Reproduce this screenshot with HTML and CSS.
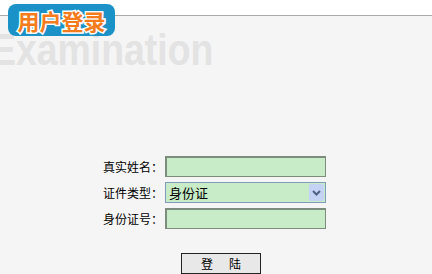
FILE: index.html
```html
<!DOCTYPE html>
<html lang="zh-CN">
<head>
  <meta charset="UTF-8">
  <title>用户登录</title>
  <link rel="stylesheet" href="styles.css">
</head>
<body>
  <header class="top">
    <div class="badge">用户登录</div>
  </header>

  <div class="watermark-wrap">
    <div class="watermark">Examination</div>
  </div>

  <form class="login-form">
    <label class="field-label" for="realname">真实姓名：</label>
    <input class="field" id="realname" type="text">

    <label class="field-label" for="idtype">证件类型：</label>
    <div class="select-box">
      <select class="field-select" id="idtype">
        <option>身份证</option>
        <option>护照</option>
        <option>军官证</option>
      </select>
      <span class="select-arrow">
        <svg width="9" height="6" viewBox="0 0 9 6"><path d="M1 1 L4.5 4.5 L8 1" fill="none" stroke="#4d6185" stroke-width="2"/></svg>
      </span>
    </div>

    <label class="field-label" for="idno">身份证号：</label>
    <input class="field" id="idno" type="text">

    <button class="login-btn" type="submit">登&nbsp;&nbsp;&nbsp;&nbsp;&nbsp;&nbsp;陆</button>
  </form>
</body>
</html>
```

FILE: styles.css
```css
body {
  margin: 0;
  background-color: #f5f5f5;
  font-family: "Noto Sans CJK SC", "Liberation Sans", sans-serif;
  font-size: 12px;
  color: #000;
}
.top {
  position: relative;
  height: 15px;
  background-color: #fff;
  border-bottom: 1px solid #aaa;
}
.badge {
  position: absolute;
  z-index: 1;
  left: 8px;
  top: 4px;
  width: 107px;
  height: 32px;
  border-radius: 8px;
  background-color: #1a92c8;
  color: #f47c1c;
  font-size: 22px;
  font-weight: bold;
  line-height: 32px;
  text-align: center;
  -webkit-text-stroke: 3px #fff;
  paint-order: stroke fill;
}
.watermark-wrap {
  height: 44px;
  margin-top: 12px;
  overflow: hidden;
}
.watermark {
  margin-left: -9px;
  font-family: "Liberation Sans", sans-serif;
  font-weight: bold;
  font-size: 44px;
  line-height: 44px;
  color: #e3e3e3;
  white-space: nowrap;
  transform: scaleX(0.85);
  transform-origin: left center;
}
.login-form {
  display: grid;
  grid-template-columns: 163px 161px;
  column-gap: 2px;
  row-gap: 5px;
  margin-top: 84px;
  align-items: center;
}
.field-label {
  text-align: right;
  line-height: 21px;
}
.field {
  box-sizing: border-box;
  width: 161px;
  height: 21px;
  margin: 0;
  border: 2px solid #7d8d7d;
  border-width: 2px 1px 1px 2px;
  background-color: #c8ecc8;
}
.select-box {
  position: relative;
  box-sizing: border-box;
  width: 161px;
  height: 21px;
  border: 1px solid #7f9db9;
  background-color: #c8ecc8;
}
.field-select {
  appearance: none;
  width: 100%;
  height: 19px;
  margin: 0;
  padding: 0 0 0 3px;
  border: none;
  background: transparent;
  font-family: "Noto Sans CJK SC", sans-serif;
  font-size: 13px;
  line-height: 19px;
}
.select-arrow {
  position: absolute;
  right: 1px;
  top: 1px;
  width: 15px;
  height: 17px;
  border-radius: 2px;
  background-color: #c4d2f4;
  display: flex;
  align-items: center;
  justify-content: center;
  pointer-events: none;
}
.login-btn {
  grid-column: 1 / 3;
  margin: 19px 0 0 181px;
  box-sizing: border-box;
  width: 80px;
  height: 21px;
  padding: 0;
  border: 1px solid #222;
  background-color: #e8e8e8;
  font-family: "Noto Sans CJK SC", sans-serif;
  font-size: 12px;
  line-height: 19px;
  color: #000;
}
```
